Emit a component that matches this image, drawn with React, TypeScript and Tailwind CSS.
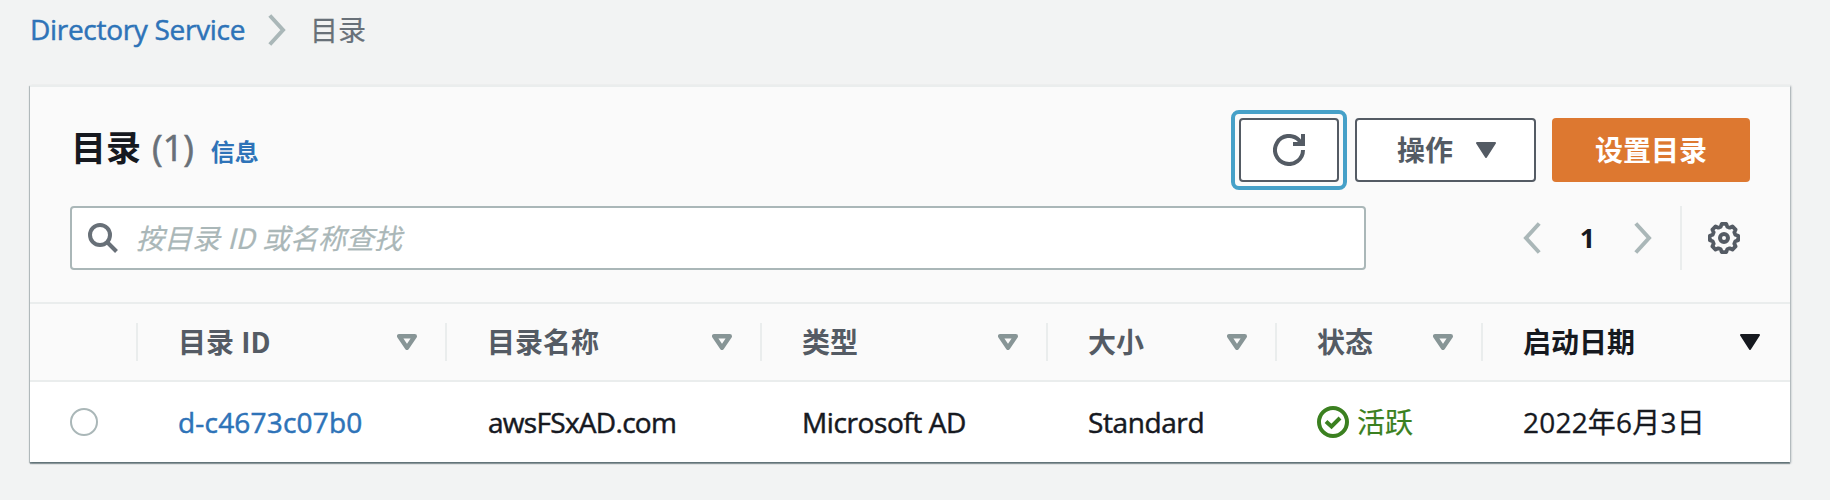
import React from "react";

const latin = "font-['Open_Sans','Noto_Sans_CJK_SC',sans-serif]";

function Chevron({ className, flip = false }: { className: string; flip?: boolean }) {
  return (
    <svg viewBox="0 0 18 32" className={className} fill="none" stroke="#aab7b8" strokeWidth="4">
      <path d={flip ? "M16.2 1.5 3 16 16.2 30.5" : "M1.8 1.5 15 16 1.8 30.5"} />
    </svg>
  );
}

function SortIcon() {
  return (
    <svg viewBox="0 0 20 16" className="h-4 w-5 shrink-0" fill="none" stroke="#879596" strokeWidth="4.4" strokeLinejoin="round">
      <path d="M2.2 2.2H17.8L10 13.8Z" />
    </svg>
  );
}

function SortedIcon({ className }: { className: string }) {
  return (
    <svg viewBox="0 0 20 16" className={className} fill="currentColor" stroke="currentColor" strokeWidth="2" strokeLinejoin="round">
      <path d="M1 1H19L10 15Z" />
    </svg>
  );
}

const gearPoints = Array.from({ length: 8 }, (_, k) =>
  [
    [-9, 14.3],
    [9, 14.3],
    [16, 11.8],
    [29, 11.8],
  ].map(([offset, r]) => {
    const a = ((k * 45 + offset) * Math.PI) / 180;
    return `${(16 + r * Math.sin(a)).toFixed(2)},${(16 - r * Math.cos(a)).toFixed(2)}`;
  }).join(" "),
).join(" ");

const columns = [
  { label: "目录 ID", width: "w-[309px]" },
  { label: "目录名称", width: "w-[315px]" },
  { label: "类型", width: "w-[286px]" },
  { label: "大小", width: "w-[229px]" },
  { label: "状态", width: "w-[206px]" },
  { label: "启动日期", width: "w-[307px]", sorted: true },
];

export default function App() {
  return (
    <div className={`h-[500px] w-[1830px] overflow-hidden bg-[#f2f3f3] text-[28px] text-[#16191f] ${latin}`}>
      <nav className="flex h-[85px] items-start pl-[30px]">
        <a className="w-[216px] pt-[9px] leading-[40px] tracking-[-0.3px] whitespace-nowrap text-[#2e73b8] [-webkit-text-stroke:0.5px]">Directory Service</a>
        <Chevron className="mt-[14px] ml-[22px] h-8 w-[18px]" />
        <span className="mt-[10px] ml-[24px] leading-[40px] text-[#687078] [-webkit-text-stroke:0.2px]">目录</span>
      </nav>

      <section className="ml-[30px] h-[377px] w-[1760px] border-t-2 border-[#eaeded] bg-white shadow-[0_2px_1px_0_rgba(0,28,36,0.35),1px_1px_2px_0_rgba(0,28,36,0.3),-1px_1px_1px_0_rgba(0,28,36,0.2)]">
        <div className="flex h-[215px] flex-col bg-[#fafafa] pr-[40px] pl-[40px]">
          <div className="flex h-[119px] items-start justify-between pt-[31px]">
            <h1 className="mt-[6px] ml-[1px] flex items-baseline leading-[48px]">
              <span className="text-[35px] font-bold">目录</span>
              <span className="ml-[11px] text-[36px] text-[#687078] [-webkit-text-stroke:0.6px]">(1)</span>
              <a className="ml-[17px] text-[24px] font-bold text-[#2e73b8]">信息</a>
            </h1>
            <div className="flex">
              <div className="-mt-2 flex h-20 w-[116px] shrink-0 items-center justify-center rounded-[8px] border-4 border-[#46a0c8]">
                <button className="flex h-16 w-[100px] items-center justify-center rounded-[4px] border-2 border-[#545b64] bg-white">
                  <svg viewBox="0 0 32 32" className="h-8 w-8" fill="none" stroke="#545b64" strokeWidth="4">
                    <path d="M30 16A14 14 0 1 1 26 6.2L29 10" />
                    <path d="M30 0V10H20" />
                  </svg>
                </button>
              </div>
              <button className="ml-2 flex h-16 w-[181px] shrink-0 items-center rounded-[4px] border-2 border-[#545b64] bg-white pl-[40px] font-bold text-[#545b64]">
                操作
                <SortedIcon className="ml-[23px] h-4 w-5" />
              </button>
              <button className="ml-4 h-16 w-[198px] shrink-0 rounded-[4px] bg-[#dd7830] font-bold text-white">设置目录</button>
            </div>
          </div>
          <div className="flex h-16 items-center">
            <label className="flex h-16 w-[1296px] items-center rounded-[4px] border-2 border-[#aab7b8] bg-white pl-4">
              <svg viewBox="0 0 30 30" className="h-[30px] w-[30px]" fill="none" stroke="#687078" strokeWidth="4">
                <circle cx="12" cy="12" r="10" />
                <path d="M19 19 28.5 28.5" />
              </svg>
              <span className="ml-[18px] pb-[2px] font-['Noto_Sans_CJK_SC',sans-serif] text-[#aab7b8] italic [-webkit-text-stroke:0.2px] [word-spacing:1px]">按目录 ID 或名称查找</span>
            </label>
            <Chevron flip className="ml-[157px] h-8 w-[18px]" />
            <span className="w-[93px] text-center text-[27px] font-bold">1</span>
            <Chevron className="h-8 w-[18px]" />
            <div className="ml-[28px] h-16 w-[2px] bg-[#eaeded]" />
            <svg viewBox="0 0 32 32" className="ml-[26px] h-8 w-8" fill="none" stroke="#545b64" strokeWidth="3.8">
              <polygon points={gearPoints} strokeLinejoin="round" />
              <circle cx="16" cy="16" r="4" strokeWidth="4" />
            </svg>
          </div>
        </div>

        <div className="flex h-20 items-center border-y-2 border-[#eaeded] bg-[#fafafa] pl-[106px] font-['Noto_Sans_CJK_SC',sans-serif]">
          {columns.map((c) => (
            <div
              key={c.label}
              className={`flex h-[38px] shrink-0 items-center justify-between border-l-2 border-[#eaeded] pr-[28px] pl-[40px] font-bold [word-spacing:1px] ${c.width} ${c.sorted ? "text-[#16191f]" : "text-[#545b64]"}`}
            >
              <span className="pb-[2px]">{c.label}</span>
              {c.sorted ? <SortedIcon className="h-4 w-5" /> : <SortIcon />}
            </div>
          ))}
        </div>

        <div className="flex h-20 items-center pl-10">
          <span className="h-7 w-7 rounded-full border-2 border-[#aab7b8] bg-white" />
          <a className="ml-[80px] w-[310px] pb-[1px] tracking-[0.2px] text-[#2e73b8] [-webkit-text-stroke:0.5px]">d-c4673c07b0</a>
          <span className="w-[314px] pb-[1px] tracking-[-0.7px] [-webkit-text-stroke:0.5px]">awsFSxAD.com</span>
          <span className="w-[286px] pb-[1px] tracking-[-0.4px] [-webkit-text-stroke:0.5px]">Microsoft AD</span>
          <span className="w-[229px] pb-[1px] tracking-[-0.4px] [-webkit-text-stroke:0.5px]">Standard</span>
          <span className="flex w-[206px] items-center text-[#3b8020]">
            <svg viewBox="0 0 32 32" className="h-8 w-8" fill="none" stroke="#3b8020" strokeWidth="4">
              <circle cx="16" cy="16" r="14" />
              <path d="M9 15.5 14.5 20.5 23 12" />
            </svg>
            <span className="ml-[8px] [-webkit-text-stroke:0.2px]">活跃</span>
          </span>
          <span className="pb-[1px] tracking-[0.2px] whitespace-nowrap [-webkit-text-stroke:0.3px]">2022年6月3日</span>
        </div>
      </section>
    </div>
  );
}
